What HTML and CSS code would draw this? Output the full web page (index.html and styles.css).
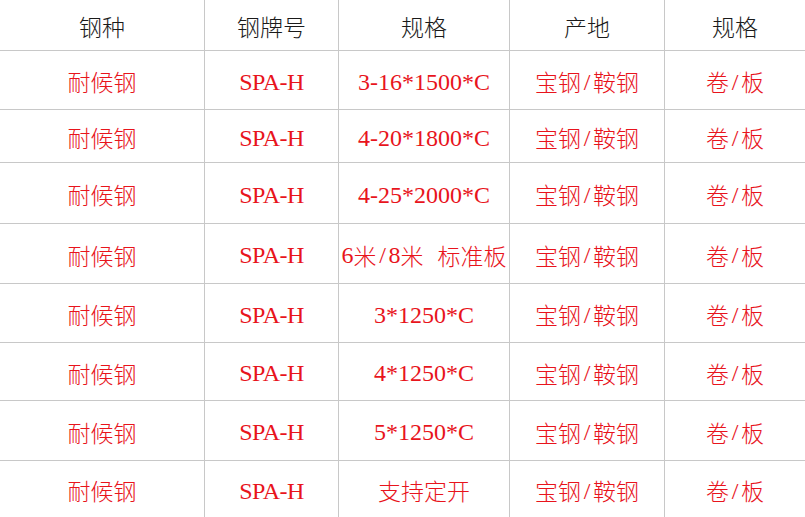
FILE: index.html
```html
<!DOCTYPE html>
<html lang="zh-CN">
<head>
<meta charset="utf-8">
<link rel="stylesheet" href="styles.css">
</head>
<body>
<div class="grid">
  <div class="c h">钢种</div><div class="c h">钢牌号</div><div class="c h">规格</div><div class="c h">产地</div><div class="c h e">规格</div>

  <div class="c r">耐候钢</div><div class="c r"><span class="l spa">SPA-H</span></div><div class="c r"><span class="l">3-16*1500*C</span></div><div class="c r">宝钢<span class="l sl">/</span>鞍钢</div><div class="c r e">卷<span class="l sl">/</span>板</div>

  <div class="c r">耐候钢</div><div class="c r"><span class="l spa">SPA-H</span></div><div class="c r"><span class="l">4-20*1800*C</span></div><div class="c r">宝钢<span class="l sl">/</span>鞍钢</div><div class="c r e">卷<span class="l sl">/</span>板</div>

  <div class="c r">耐候钢</div><div class="c r"><span class="l spa">SPA-H</span></div><div class="c r"><span class="l">4-25*2000*C</span></div><div class="c r">宝钢<span class="l sl">/</span>鞍钢</div><div class="c r e">卷<span class="l sl">/</span>板</div>

  <div class="c r">耐候钢</div><div class="c r"><span class="l spa">SPA-H</span></div><div class="c r"><span class="l">6</span>米<span class="l sl">/</span><span class="l">8</span>米<span class="l sp"> </span>标准板</div><div class="c r">宝钢<span class="l sl">/</span>鞍钢</div><div class="c r e">卷<span class="l sl">/</span>板</div>

  <div class="c r">耐候钢</div><div class="c r"><span class="l spa">SPA-H</span></div><div class="c r"><span class="l">3*1250*C</span></div><div class="c r">宝钢<span class="l sl">/</span>鞍钢</div><div class="c r e">卷<span class="l sl">/</span>板</div>

  <div class="c r">耐候钢</div><div class="c r"><span class="l spa">SPA-H</span></div><div class="c r"><span class="l">4*1250*C</span></div><div class="c r">宝钢<span class="l sl">/</span>鞍钢</div><div class="c r e">卷<span class="l sl">/</span>板</div>

  <div class="c r">耐候钢</div><div class="c r"><span class="l spa">SPA-H</span></div><div class="c r"><span class="l">5*1250*C</span></div><div class="c r">宝钢<span class="l sl">/</span>鞍钢</div><div class="c r e">卷<span class="l sl">/</span>板</div>

  <div class="c r last">耐候钢</div><div class="c r last"><span class="l spa">SPA-H</span></div><div class="c r last">支持定开</div><div class="c r last">宝钢<span class="l sl">/</span>鞍钢</div><div class="c r e last">卷<span class="l sl">/</span>板</div>
</div>
</body>
</html>
```

FILE: styles.css
```css
html, body {
  margin: 0;
  padding: 0;
  background: #ffffff;
}
body {
  width: 805px;
  height: 517px;
  overflow: hidden;
  font-family: "Noto Sans CJK SC", "Liberation Serif", serif;
  font-size: 23px;
}
.grid {
  display: grid;
  grid-template-columns: 205px 134px 171px 155px 140px;
  grid-template-rows: 51px 59px 53px 61px 60px 59px 58px 60px 56px;
}
.c {
  display: flex;
  align-items: center;
  justify-content: center;
  border-right: 1px solid #c8c8c8;
  border-bottom: 1px solid #c8c8c8;
  white-space: nowrap;
  line-height: 1;
  font-weight: 300;
}
.c.e {
  border-right: none;
}
.c.last {
  border-bottom: none;
}
.h {
  color: #1a1a1a;
  padding-top: 2px;
}
.r {
  color: #e8141c;
  padding-top: 3px;
}
.l {
  font-family: "Liberation Serif", serif;
  font-size: 24px;
  font-weight: 400;
}
.spa {
  letter-spacing: -0.5px;
}
.sl {
  display: inline-block;
  width: 12px;
  text-align: center;
}
.sp {
  display: inline-block;
  width: 14px;
}
```
